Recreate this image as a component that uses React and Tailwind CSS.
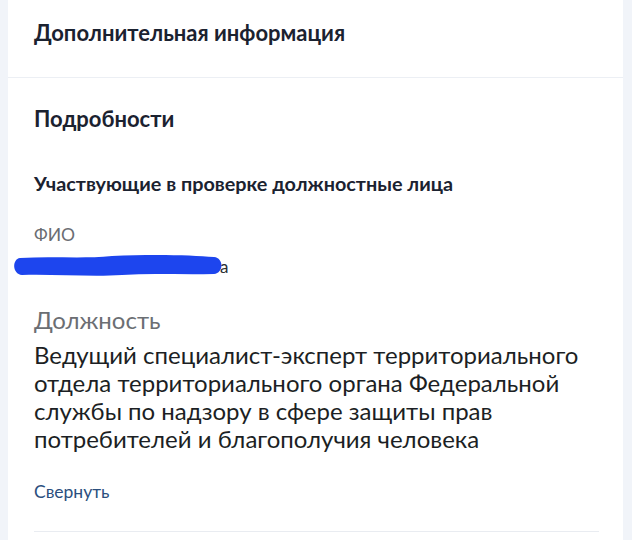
import React, { useState } from 'react';

export default function App() {
  const [expanded, setExpanded] = useState(true);

  return (
    <div className="w-[632px] h-[540px] bg-[#f1f4f9] overflow-hidden" style={{ fontFamily: 'Lato, "Noto Sans", sans-serif' }}>
      <div className="mx-[8px] w-[615px] h-full bg-white">
        {/* заголовок */}
        <div className="h-[78px] px-[26px] pt-[18px] border-b border-[#eceff4]">
          <h2 className="text-[22px] leading-[30px] font-bold text-[#1b2230]">Дополнительная информация</h2>
        </div>

        <div className="px-[26px] pt-[26px]">
          <h3 className="text-[22px] leading-[30px] font-bold text-[#1b2230]">Подробности</h3>

          <div className="mt-[38px] text-[19.8px] leading-[22px] font-bold text-[#1b2230]">
            Участвующие в проверке должностные лица
          </div>

          <div className="mt-[31px] text-[17.5px] leading-[20px] text-[#6a6d72]">ФИО</div>
          <div className="relative h-[30px] mt-[2px]">
            <span className="absolute left-[186px] top-[10px] text-[17px] leading-[20px] text-[#2a2d33]">а</span>
            <svg className="absolute left-[-22px] top-[0px]" width="216" height="30" viewBox="0 0 216 30">
              <path
                d="M8 11 C40 9 70 12 100 9 C140 7 180 8 202 10 C212 11 212 26 202 27 C170 28 140 26 110 28 C80 30 40 27 10 28 C0 27 0 12 8 11 Z"
                fill="#1d45ee"
              />
            </svg>
          </div>

          {expanded && (
            <div className="mt-[28px]">
              <div className="text-[24px] leading-[30px] text-[#6b6e73]">Должность</div>
              <div className="mt-[6px] text-[24px] leading-[28px] text-[#1c1f24] w-[570px]">
                Ведущий специалист-эксперт территориального отдела территориального органа Федеральной службы по надзору в сфере защиты прав потребителей и благополучия человека
              </div>
            </div>
          )}

          <button
            onClick={() => setExpanded(!expanded)}
            className="block mt-[29px] text-[17.5px] leading-[20px] text-[#2b4f7e]"
          >
            {expanded ? 'Свернуть' : 'Развернуть'}
          </button>

          <div className="mt-[29px] border-b border-[#e9ecf1] mr-[-2px]" />
        </div>
      </div>
    </div>
  );
}
